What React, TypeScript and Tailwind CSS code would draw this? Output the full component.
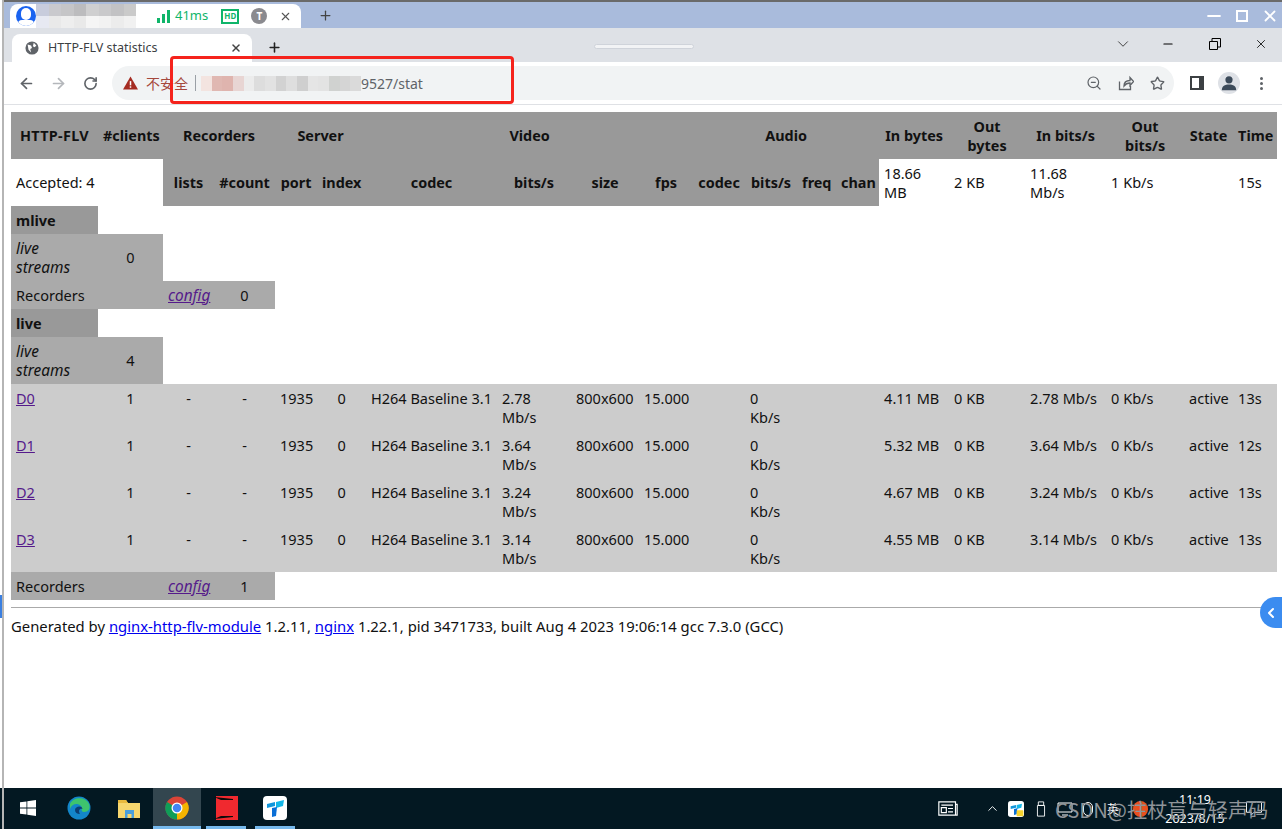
import { ArrowLeft, ArrowRight, ChevronDown, ChevronLeft, ChevronUp, Minus, Plus, RotateCw, Star, X, ZoomOut } from "lucide-react";

const COLS = [87, 65, 51, 61, 42, 49, 131, 74, 68, 54, 52, 52, 39, 43, 70, 76, 81, 78, 49, 44];

const STREAMS = [
  { name: "D0", rate: "2.78", inBytes: "4.11 MB", time: "13s" },
  { name: "D1", rate: "3.64", inBytes: "5.32 MB", time: "12s" },
  { name: "D2", rate: "3.24", inBytes: "4.67 MB", time: "13s" },
  { name: "D3", rate: "3.14", inBytes: "4.55 MB", time: "13s" },
];

const MOSAIC = ["#f3e4e0", "#e0b8b2", "#dfb4ae", "#e8d5d3", "#ececec", "#dddddd", "#e2e2e2", "#d2d2d2", "#dedede", "#cfcfcf", "#e5e5e5", "#e3e3e3", "#d0d2d0", "#d5d5d5", "#dadada"];
const MOSAIC_TOP = ["#c8ccdc", "#c9c9cd", "#c5c5c7", "#bcbcbe", "#cfcfd0", "#c9c9cb", "#c2c2c4", "#cacaca"];
const MOSAIC_BOTTOM = ["#e7e9f2", "#e9e9e9", "#eeeeee", "#e9e9e9", "#f5f5f5", "#f2f2f2", "#ececec", "#f1f1f1"];

function Th({ children, colSpan, rowSpan }: { children?: React.ReactNode; colSpan?: number; rowSpan?: number }) {
  return (
    <th colSpan={colSpan} rowSpan={rowSpan} className="bg-[#999] px-[5px] py-0 text-center text-[14.4px] font-bold">
      {children}
    </th>
  );
}

function Td({ children, center, className = "" }: { children?: React.ReactNode; center?: boolean; className?: string }) {
  return <td className={`px-[5px] py-0 ${center ? "text-center" : "text-left"} ${className}`}>{children}</td>;
}

function ChromeLogo() {
  return (
    <svg viewBox="0 0 48 48" className="h-6 w-6">
      <circle cx="24" cy="24" r="23" fill="#db4437" />
      <path d="M24 24 L44 12 A23 23 0 0 1 24 47 Z" fill="#f4b400" />
      <path d="M24 24 L24 47 A23 23 0 0 1 4 12 Z" fill="#0f9d58" />
      <circle cx="24" cy="24" r="11" fill="#fff" />
      <circle cx="24" cy="24" r="8.5" fill="#4285f4" />
    </svg>
  );
}

function EdgeLogo() {
  return (
    <svg viewBox="0 0 48 48" className="h-6 w-6">
      <circle cx="24" cy="24" r="23" fill="#1386c9" />
      <path d="M6 16 C12 2 36 0 44 16 C48 26 42 32 34 32 C26 32 32 24 28 20 C20 13 10 16 6 26 Z" fill="#3ec46d" />
      <path d="M16 28 C16 20 30 18 31 26 C25 24 22 30 26 36 C20 36 16 33 16 28 Z" fill="#0b3f73" />
    </svg>
  );
}

function FolderLogo() {
  return (
    <svg viewBox="0 0 24 24" className="h-6 w-6">
      <path d="M1 4h8l2 3h12v15H1z" fill="#f6d66e" />
      <path d="M1 4h8l2 3H1z" fill="#e8b93e" />
      <rect x="8" y="14" width="9" height="8" fill="#4a9fdc" />
      <rect x="10.5" y="18" width="4" height="4" fill="#f6d66e" />
    </svg>
  );
}

function RedAppLogo() {
  return (
    <svg viewBox="0 0 24 24" className="h-6 w-6">
      <rect x="2" y="0" width="22" height="24" fill="#f0292f" />
      <path d="M0 1 L19 3 V21 L0 23 L7 20 V4 Z" fill="#0c0c0c" />
      <rect x="7" y="4" width="12" height="16" fill="#f0292f" />
    </svg>
  );
}

function TodeskLogo({ small }: { small?: boolean }) {
  return (
    <svg viewBox="0 0 24 24" className={small ? "h-4 w-4" : "h-6 w-6"}>
      <rect width="24" height="24" rx="4" fill="#fff" />
      <path d="M4 8l8-2v4l-8 2z" fill="#1296db" />
      <path d="M13 6l8-2-1 6-7 2z" fill="#14b7e8" />
      <path d="M9 12l5-1-1 9-4 1z" fill="#0a6fd6" />
      {small && <rect x="13" y="14" width="10" height="9" rx="1" fill="#f6d32d" />}
    </svg>
  );
}

function Browser() {
  return (
    <div className="flex shrink-0 flex-col">
      {/* outer window title */}
      <div className="flex h-7 items-end border-t-2 border-[#6a6a6a] bg-[#a9bbdc] pl-[10px]">
        <div className="relative flex h-[24px] w-[291px] items-center rounded-t-lg bg-white pl-[6px]">
          <div className="relative h-[20px] w-[20px] overflow-hidden rounded-full bg-[#1a63f0]">
            <div className="absolute left-[5px] top-[2px] h-[12px] w-[10px] rounded-full bg-white" />
            <div className="absolute left-[2px] top-[14px] h-[8px] w-[16px] rounded-full bg-white" />
          </div>
          <div className="grid h-[24px] w-[100px] grid-cols-8 grid-rows-2">
            {MOSAIC_TOP.map((c, i) => (
              <div key={i} style={{ background: c }} />
            ))}
            {MOSAIC_BOTTOM.map((c, i) => (
              <div key={i} style={{ background: c }} />
            ))}
          </div>
          <div className="ml-[21px] flex h-[13px] items-end gap-[2px]">
            <div className="h-[5px] w-[3px] bg-[#10b56a]" />
            <div className="h-[9px] w-[3px] bg-[#10b56a]" />
            <div className="h-[13px] w-[3px] bg-[#10b56a]" />
          </div>
          <span className="ml-[5px] text-[13px] text-[#10b56a]">41ms</span>
          <span className="ml-[13px] flex h-[15px] w-[18px] items-center justify-center border-2 border-[#10b56a] text-[8px] font-bold leading-none text-[#10b56a]">HD</span>
          <span className="ml-[12px] flex h-[16px] w-[16px] items-center justify-center rounded-full bg-[#8a8a8f] text-[10px] font-bold text-white">T</span>
          <X className="ml-[12px] h-[13px] w-[13px] text-[#555]" />
        </div>
        <Plus className="mb-[5px] ml-[17px] h-[15px] w-[15px] text-[#444]" />
        <div className="ml-auto mb-[2px] flex items-center">
          <Minus className="h-5 w-5 text-white" strokeWidth={2.6} />
          <div className="ml-[12px] h-[12px] w-[12px] border-2 border-white" />
          <X className="ml-[13px] mr-[3px] h-[18px] w-[18px] text-white" strokeWidth={2.4} />
        </div>
      </div>

      {/* chrome tab strip */}
      <div className="flex h-[34px] items-end bg-[#dee1e6] pl-[12px]">
        <div className="flex h-[28px] w-[240px] items-center rounded-t-lg bg-white pl-[13px]">
          <svg viewBox="0 0 16 16" className="h-[14px] w-[14px]">
            <circle cx="8" cy="8" r="7.5" fill="#5f6368" />
            <path d="M3 4l4 1 1 3-2 1 1 4-3-3zM10 2l3 3-2 2-2-1z" fill="#fff" />
          </svg>
          <span className="ml-[9px] text-[12.5px] text-[#3c4043]">HTTP-FLV statistics</span>
          <X className="ml-[72px] h-[12px] w-[12px] text-[#444]" strokeWidth={3} />
        </div>
        <Plus className="mb-[7px] ml-[15px] h-[15px] w-[15px] text-[#222]" strokeWidth={2.5} />
        <div className="mb-[13px] ml-[312px] h-[5px] w-[100px] rounded-sm border border-[#cfd3da] bg-[#f2f3f5]" />
        <div className="mb-[9px] ml-auto flex items-center">
          <ChevronDown className="h-[18px] w-[18px] text-[#333]" strokeWidth={1.2} />
          <Minus className="ml-[29px] h-[14px] w-[14px] text-black" />
          <svg viewBox="0 0 12 12" className="ml-[34px] h-[12px] w-[12px] fill-none stroke-black">
            <path d="M.5 3.5h8v8h-8zM3 3.5V.5h8.5V9H8.5" />
          </svg>
          <X className="ml-[33px] mr-[14px] h-[14px] w-[14px] text-black" strokeWidth={1.4} />
        </div>
      </div>

      {/* toolbar */}
      <div className="flex h-[43px] items-center border-b border-[#dfe1e5] bg-white pl-[18px]">
        <ArrowLeft className="h-[17px] w-[17px] text-[#5f6368]" strokeWidth={2.4} />
        <ArrowRight className="ml-[15px] h-[17px] w-[17px] text-[#b4b7bb]" strokeWidth={2.4} />
        <RotateCw className="ml-[16px] h-[15px] w-[15px] text-[#5f6368]" strokeWidth={2.6} />
        <div className="ml-[14px] flex h-[34px] w-[1062px] items-center rounded-full bg-[#f1f3f4] pl-[11px]">
          <svg viewBox="0 0 16 14" className="h-[14px] w-[15px]">
            <path d="M8 0l8 14H0z" fill="#a52c22" />
            <rect x="7.2" y="5" width="1.6" height="4.5" fill="#fff" />
            <rect x="7.2" y="10.5" width="1.6" height="1.6" fill="#fff" />
          </svg>
          <span className="ml-[8px] font-['Noto_Sans_CJK_SC'] text-[14px] text-[#a5483c]">不安全</span>
          <div className="ml-[7px] h-[16px] w-px bg-[#9aa0a6]" />
          <div className="ml-[5px] flex h-[15px] w-[160px]">
            {MOSAIC.map((c, i) => (
              <div key={i} className="flex-1" style={{ background: c }} />
            ))}
          </div>
          <span className="text-[14px] text-[#5f6368]">9527/stat</span>
          <div className="ml-auto flex items-center gap-[16px] pr-[9px] text-[#5f6368]">
            <ZoomOut className="h-[16px] w-[16px]" strokeWidth={1.8} />
            <svg viewBox="0 0 16 16" className="h-[16px] w-[16px] fill-none stroke-[#5f6368] stroke-[1.3]">
              <path d="M1.5 6.5v8h11V11M6 11c0-4 3-5.5 6-5.5V2.5l3.5 4-3.5 4V8C9.5 8 7.5 9 6 11z" />
            </svg>
            <Star className="h-[15px] w-[15px]" strokeWidth={2.2} />
          </div>
        </div>
        <div className="ml-[16px] flex h-[14px] w-[14px] justify-start border-2 border-[#3c4043] bg-[#3c4043]">
          <div className="h-full w-[7px] bg-white" />
        </div>
        <div className="ml-[14px] flex h-[22px] w-[22px] items-center justify-center overflow-hidden rounded-full bg-[#dee1e6]">
          <svg viewBox="0 0 20 20" className="h-[16px] w-[16px] fill-[#3c4a59]">
            <circle cx="10" cy="6" r="4.5" />
            <path d="M1 19c0-5 4-7 9-7s9 2 9 7z" />
          </svg>
        </div>
        <div className="ml-[20px] flex flex-col gap-[2px]">
          <div className="h-[3px] w-[3px] rounded-full bg-[#5f6368]" />
          <div className="h-[3px] w-[3px] rounded-full bg-[#5f6368]" />
          <div className="h-[3px] w-[3px] rounded-full bg-[#5f6368]" />
        </div>
      </div>
    </div>
  );
}

function StatTable() {
  return (
    <table className="ml-[11px] mt-[7px] w-[1266px] table-fixed border-collapse text-[14.5px] leading-[19px] text-[#111]">
      <colgroup>
        {COLS.map((w, i) => (
          <col key={i} style={{ width: w }} />
        ))}
      </colgroup>
      <tbody>
        <tr className="h-[47px]">
          <Th><span className="tracking-[0.3px]">HTTP-FLV</span></Th>
          <Th>#clients</Th>
          <Th colSpan={2}>Recorders</Th>
          <Th colSpan={2}>Server</Th>
          <Th colSpan={4}>Video</Th>
          <Th colSpan={4}>Audio</Th>
          <Th>In bytes</Th>
          <Th>Out bytes</Th>
          <Th>In bits/s</Th>
          <Th>Out bits/s</Th>
          <Th>State</Th>
          <Th>Time</Th>
        </tr>
        <tr className="h-[47px]">
          <td colSpan={2} className="px-[5px]">Accepted: 4</td>
          {["lists", "#count", "port", "index", "codec", "bits/s", "size", "fps", "codec", "bits/s", "freq", "chan"].map((h, i) => (
            <Th key={i}>{h}</Th>
          ))}
          <Td>18.66 MB</Td>
          <Td>2 KB</Td>
          <Td>11.68 Mb/s</Td>
          <Td>1 Kb/s</Td>
          <Td />
          <Td>15s</Td>
        </tr>
        <Section name="mlive" count="0" recorders="0" />
        <SectionHead name="live" count="4" />
        {STREAMS.map((s) => (
          <tr key={s.name} className="h-[47px] bg-[#ccc] align-top">
            <Td className="pt-[5px]"><a className="text-[#551a8b] underline">{s.name}</a></Td>
            <Td center className="pt-[5px]">1</Td>
            <Td center className="pt-[5px]">-</Td>
            <Td center className="pt-[5px]">-</Td>
            <Td center className="pt-[5px]">1935</Td>
            <Td center className="pt-[5px]">0</Td>
            <Td className="whitespace-nowrap pt-[5px]">H264 Baseline 3.1</Td>
            <Td className="pt-[5px]">{s.rate} Mb/s</Td>
            <Td className="pt-[5px]">800x600</Td>
            <Td className="pt-[5px]">15.000</Td>
            <Td className="pt-[5px]" />
            <Td className="pt-[5px]">0<br />Kb/s</Td>
            <Td className="pt-[5px]" />
            <Td className="pt-[5px]" />
            <Td className="whitespace-nowrap pt-[5px]">{s.inBytes}</Td>
            <Td className="pt-[5px]">0 KB</Td>
            <Td className="whitespace-nowrap pt-[5px]">{s.rate} Mb/s</Td>
            <Td className="whitespace-nowrap pt-[5px]">0 Kb/s</Td>
            <Td className="pt-[5px]">active</Td>
            <Td className="pt-[5px]">{s.time}</Td>
          </tr>
        ))}
        <RecordersRow count="1" />
      </tbody>
    </table>
  );
}

function RecordersRow({ count }: { count: string }) {
  return (
    <tr className="h-[28px]">
      <td colSpan={2} className="bg-[#aaa] px-[5px]">Recorders</td>
      <Td className="bg-[#aaa] text-[15.4px] italic"><a className="text-[#551a8b] underline">config</a></Td>
      <Td center className="bg-[#aaa]">{count}</Td>
    </tr>
  );
}

function SectionHead({ name, count }: { name: string; count: string }) {
  return (
    <>
      <tr className="h-[28px]">
        <th className="bg-[#999] px-[5px] text-left font-bold">{name}</th>
      </tr>
      <tr className="h-[47px]">
        <Td className="bg-[#aaa] text-[15.4px] italic">live<br />streams</Td>
        <Td center className="bg-[#aaa]">{count}</Td>
      </tr>
    </>
  );
}

function Section({ name, count, recorders }: { name: string; count: string; recorders: string }) {
  return (
    <>
      <SectionHead name={name} count={count} />
      <RecordersRow count={recorders} />
    </>
  );
}

function Taskbar() {
  return (
    <div className="flex h-[41px] shrink-0 items-stretch bg-[#031822] pl-[20px] text-white">
      <svg viewBox="0 0 16 16" className="mt-[12px] h-[16px] w-[16px] fill-white">
        <path d="M0 2.3l6.5-.9v6.2H0zM7.3 1.3L16 0v7.6H7.3zM0 8.4h6.5v6.2L0 13.7zM7.3 8.4H16V16l-8.7-1.3z" />
      </svg>
      <div className="ml-[31px] mt-[8px]"><EdgeLogo /></div>
      <div className="ml-[26px] mt-[8px]"><FolderLogo /></div>
      <div className="ml-[12px] flex w-[48px] justify-center border-b-[3px] border-[#76b9ed] bg-[#33464f] pt-[8px]"><ChromeLogo /></div>
      <div className="ml-[5px] flex w-[40px] justify-center border-b-[3px] border-[#76b9ed] pt-[8px]"><RedAppLogo /></div>
      <div className="ml-[9px] flex w-[40px] justify-center border-b-[3px] border-[#76b9ed] pt-[8px]"><TodeskLogo /></div>

      {/* system tray */}
      <div className="ml-auto flex items-center pr-[19px]">
        <svg viewBox="0 0 24 18" className="h-[15px] w-[24px] fill-none stroke-white stroke-[1.4]">
          <path d="M1 1h20v16H1zM21 4h2v13h-2M4 5h14M4 8h6v6H4zM12 9h6M12 13h6" />
        </svg>
        <ChevronUp className="ml-[25px] h-[15px] w-[15px] text-white" strokeWidth={1.5} />
        <div className="ml-[8px]"><TodeskLogo small /></div>
        <svg viewBox="0 0 12 18" className="ml-[11px] h-[16px] w-[12px] fill-none stroke-white">
          <path d="M3 1h6v4H3zM2 5h8v12H2z" />
        </svg>
        <svg viewBox="0 0 16 14" className="ml-[10px] h-[14px] w-[16px] fill-none stroke-white">
          <path d="M1 1h14v9H1zM5 13h6" />
        </svg>
        <div className="ml-[10px] h-[14px] w-[10px] rounded-full border border-white" />
        <span className="ml-[14px] font-['Noto_Sans_CJK_SC'] text-[12px] leading-none">英</span>
        <div className="ml-[14px] h-[16px] w-[15px] rounded-full bg-[#e8501f]" />
        <div className="ml-[17px] flex w-[60px] flex-col items-center gap-[6px] text-[12.5px] leading-[13px]">
          <span>11:19</span>
          <span>2023/8/15</span>
        </div>
        <svg viewBox="0 0 18 16" className="ml-[20px] h-[15px] w-[18px] fill-none stroke-white">
          <path d="M1 1h16v11H9l-3 3v-3H1z" />
        </svg>
      </div>
    </div>
  );
}

export default function App() {
  return (
    <div className="relative flex h-[829px] w-[1282px] flex-col overflow-hidden bg-white font-['Noto_Sans','Liberation_Sans',sans-serif]">
      <Browser />

      <main className="flex-1 bg-white">
        <StatTable />
        <hr className="ml-[11px] mt-[7px] border-t border-[#aaa]" />
        <p className="ml-[11px] mt-[9px] text-[14.85px] leading-[19px] text-[#111]">
          Generated by <a className="text-[#0000ee] underline">nginx-http-flv-module</a> 1.2.11,{" "}
          <a className="text-[#0000ee] underline">nginx</a> 1.22.1, pid 3471733, built Aug 4 2023 19:06:14 gcc 7.3.0 (GCC)
        </p>
      </main>

      <Taskbar />

      {/* overlays: left window edge, red annotation, side tab, watermark */}
      <div className="absolute left-0 top-0 h-[788px] w-[2px] bg-white" />
      <div className="absolute left-[2px] top-0 h-[829px] w-[2px] bg-[#b5b5b5]" />
      <div className="absolute left-0 top-[595px] h-[23px] w-[2px] bg-[#3a7fe0]" />
      <div className="absolute left-[170px] top-[56px] h-[48px] w-[344px] rounded-sm border-[3px] border-[#f5231c]" />
      <div className="absolute left-[1260px] top-[597px] flex h-[31px] w-[30px] items-center rounded-l-full bg-[#3b8cf0] pl-[3px]">
        <ChevronLeft className="h-[16px] w-[16px] text-white" strokeWidth={3} />
      </div>
      <div className="absolute left-[1055px] top-[797px] whitespace-nowrap font-['Noto_Sans_CJK_SC'] text-[20.2px] leading-[26px] text-[#8f9499]">CSDN@拄杖盲与轻声码</div>
    </div>
  );
}
